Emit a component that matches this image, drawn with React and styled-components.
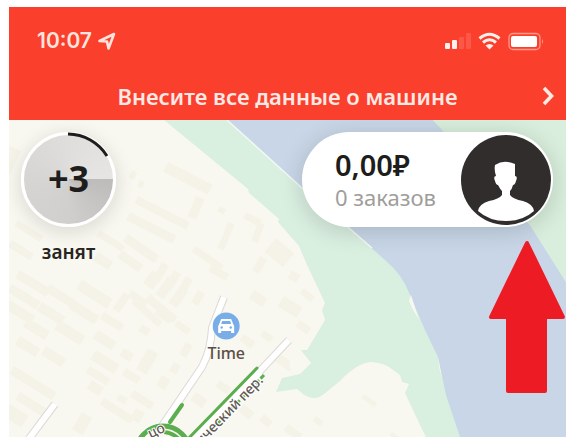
import React from 'react';
import styled, { createGlobalStyle } from 'styled-components';

// x, y, width, height, angle
const buildings = [
	[12, 284, 34, 9, 32], [20, 270, 36, 9, 32], [50, 284, 30, 9, 32], [82, 280, 36, 11, 32],
	[10, 300, 30, 10, 32], [42, 302, 28, 10, 32], [74, 300, 30, 10, 32], [104, 312, 24, 8, 32],
	[28, 318, 26, 10, 32], [60, 320, 30, 11, 32], [98, 330, 22, 10, 32], [20, 336, 24, 10, 32],
	[46, 346, 24, 10, 32], [96, 350, 28, 11, 32], [14, 366, 50, 9, 32], [90, 366, 24, 8, 32],
	[20, 392, 36, 9, 32], [10, 404, 22, 14, 32], [124, 348, 12, 9, 32], [126, 368, 18, 8, 32],
	[148, 348, 12, 24, 30], [162, 375, 10, 12, 30], [92, 380, 14, 10, 32], [104, 398, 36, 8, 32],
	[134, 390, 24, 8, 32], [82, 412, 12, 20, 30], [136, 408, 10, 12, 30], [120, 394, 9, 7, 30],
	[124, 292, 8, 20, 35], [136, 298, 36, 7, 42], [142, 324, 10, 8, 30], [150, 294, 36, 8, 40],
	[152, 270, 12, 16, 35], [168, 276, 10, 22, 35], [180, 286, 10, 20, 35],
	[168, 162, 50, 11, 27], [196, 196, 9, 22, 22], [220, 206, 7, 6, 27], [138, 196, 58, 8, 27],
	[130, 212, 52, 9, 27], [228, 222, 7, 28, 22], [246, 212, 18, 7, 27], [258, 222, 7, 20, 20],
	[196, 246, 34, 7, 35], [212, 264, 20, 8, 30], [260, 256, 8, 16, 30], [276, 238, 24, 18, 40],
	[292, 270, 10, 9, 30], [254, 290, 16, 10, 32], [284, 296, 22, 12, 32], [304, 288, 14, 7, 40],
	[128, 234, 38, 9, 35], [122, 250, 26, 9, 35], [162, 262, 8, 20, 30], [174, 270, 8, 20, 30],
	[186, 276, 8, 18, 30], [198, 290, 8, 14, 30], [132, 290, 20, 8, 35],
	[10, 146, 12, 26, 25], [18, 220, 30, 7, 32], [12, 240, 26, 8, 32], [100, 230, 30, 7, 32],
	[98, 252, 18, 10, 32], [132, 170, 6, 8, 25], [140, 180, 5, 7, 25],
	[196, 392, 14, 10, 35], [220, 380, 14, 8, 35], [264, 330, 12, 7, 35], [280, 354, 18, 9, 35],
	[244, 334, 14, 8, 35], [300, 320, 14, 8, 35], [364, 394, 16, 5, 35], [392, 432, 10, 4, 35],
	[158, 308, 18, 7, 35], [178, 320, 16, 7, 35], [186, 342, 8, 14, 30], [174, 362, 8, 10, 30],
	[244, 404, 14, 9, 40], [264, 414, 12, 8, 40], [288, 424, 18, 8, 35], [316, 416, 10, 6, 35],
];

function Streets () {
	return (
		<MapCanvas viewBox="9 120 557 317" preserveAspectRatio="xMidYMin slice" aria-hidden="true">
			<rect x="9" y="120" width="557" height="317" fill="#f9f8f0"/>
			{
				buildings.map(([x, y, w, h, angle]) => (
					<rect
						key={`${x}-${y}`}
						x={x}
						y={y}
						width={w}
						height={h}
						fill="#f5f3e7"
						transform={`rotate(${angle} ${x} ${y})`}
					/>
				))
			}
			<path d="M164 120L248 189L249 193L279 219L278 222L299 246L307 265L325 303L322 310L325 320L307 350L300 349L311 363L300 374L282 378L276 392L297 389L303 394Q315 402 324 394L340 381Q358 362 372 362Q385 363 393 370L400 375L402 382L409 384L405 393L413 410L420 425L426 437H566V120Z" fill="#d9efe0"/>
			<path d="M307 350L298 350L311 363L298 374L290 368V345Z" fill="#f9f8f0"/>
			<path d="M227 120L302 188L349 228L385 260Q403 275 410 295L425 330L438 357L446 395L460 437H566V282L530 225L433 120Z" fill="#c8d6e7"/>
			<path d="M227 120L302 188L349 228L372 248" fill="none" stroke="#f4f8f4" strokeWidth="1.5"/>
			<path d="M411 295L409 301L412 308L419 320ZM438 357L439 367L442 379Z" fill="#f9f8f0"/>
			<path d="M433 120L530 225L566 282V120Z" fill="#d9eedd"/>

			<g fill="none" stroke="#dcd8d6" strokeWidth="8">
				<path d="M224 297L212 328Q211 350 202 367L162 426"/>
				<path d="M289 340L190 446"/>
				<path d="M55 404L28 440"/>
			</g>
			<g fill="none" stroke="#ffffff" strokeWidth="6">
				<path d="M224 297L212 328Q211 350 202 367L162 426"/>
				<path d="M289 340L190 446"/>
				<path d="M55 404L28 440"/>
			</g>

			<path d="M182 405L170 422" stroke="#5bae4e" strokeWidth="4" strokeLinecap="round"/>
			<circle cx="163" cy="453" r="27" fill="#f9f8f0" stroke="#5bae4e" strokeWidth="5"/>
			<path d="M164 432Q175 433 181 442" fill="none" stroke="#5bae4e" strokeWidth="4"/>
			<path d="M261 373L190 446" stroke="#ffffff" strokeWidth="10"/>
			<path d="M257 368L184 443" stroke="#5bae4e" strokeWidth="3" strokeLinecap="round"/>
			<path d="M264 375L196 446" stroke="#5bae4e" strokeWidth="3" strokeDasharray="5 2"/>
			<StreetName x="264" y="381" textAnchor="end" transform="rotate(-46 264 381)">мический пер.</StreetName>
			<StreetName x="166" y="431" textAnchor="end" transform="rotate(-26 166 431)">цо</StreetName>
		</MapCanvas>
	);
}

function StatusIcons () {
	return (
		<svg width="100" height="20" viewBox="444 31 100 20" aria-hidden="true">
			<g fill="#fff0ec">
				<rect x="445" y="43" width="5" height="6" rx="1"/>
				<rect x="452" y="40" width="5" height="9" rx="1"/>
				<rect x="459" y="37" width="5" height="12" rx="1" opacity="0.14"/>
				<rect x="466" y="33" width="5" height="16" rx="1" opacity="0.14"/>
			</g>
			<g fill="none" stroke="#fff0ec" strokeWidth="3">
				<path d="M479.500 38.500Q489.500 30 499.500 38.500"/>
				<path d="M483 42.500Q489.500 37 496 42.500"/>
			</g>
			<path d="M485.500 45.500Q489.500 42.500 493.500 45.500L489.500 49.500Z" fill="#fff0ec"/>
			<rect x="509" y="33.500" width="31" height="16" rx="4" fill="none" stroke="#fd9a8c" strokeWidth="1.300"/>
			<rect x="511" y="36" width="26" height="11" rx="2" fill="#ffffff"/>
			<path d="M542 39V44Q544 41.500 542 39Z" fill="#fd9a8c"/>
		</svg>
	);
}

export default function App () {
	return (
		<>
			<GlobalStyle/>
			<Screen>
				<Header>
					<StatusBar>
						<Clock>
							10:07
							<svg width="18" height="18" viewBox="0 0 18 18" aria-hidden="true">
								<path d="M1.500 9L16 2L10.500 16.500L9 9.500Z" fill="none" stroke="#ffe4de" strokeWidth="2.600" strokeLinejoin="round"/>
							</svg>
						</Clock>
						<StatusIcons/>
					</StatusBar>
					<Banner type="button">
						<span>Внесите все данные о машине</span>
						<svg width="12" height="20" viewBox="0 0 12 20" aria-hidden="true">
							<path d="M2 2L9.500 10L2 18" fill="none" stroke="#ffe9e4" strokeWidth="3.600"/>
						</svg>
					</Banner>
				</Header>
				<MapArea>
					<Streets/>
					<Controls>
						<Activity>
							<ActivityButton type="button" aria-labelledby="status">
								<svg width="95" height="95" viewBox="0 0 95 95" aria-hidden="true">
									<path d="M47 2A46 46 0 0 1 86 24" fill="none" stroke="#1d1d1b" strokeWidth="3"/>
								</svg>
								+3
							</ActivityButton>
							<ActivityLabel id="status">занят</ActivityLabel>
						</Activity>
						<Balance type="button">
							<BalanceText>
								<Amount>0,00₽</Amount>
								<Orders>0 заказов</Orders>
							</BalanceText>
							<svg width="90" height="90" viewBox="0 0 90 90" aria-hidden="true">
								<circle cx="45" cy="45" r="45" fill="#302d2c"/>
								<path d="M34 30Q43 24 54 29V41Q57 41 55 46Q54 50 52 50Q51 54 49 56V60Q52 64 62 66Q72 69 73 76Q62 86 45 86Q28 86 17 76Q18 69 28 66Q38 64 41 60V56Q39 54 37 50Q35 50 34 46Q32 41 35 41Q33 35 34 30Z" fill="#ffffff"/>
							</svg>
						</Balance>
					</Controls>
					<Place>
						<svg width="28" height="28" viewBox="0 0 28 28" aria-hidden="true">
							<circle cx="14" cy="14" r="13.500" fill="#78ade8"/>
							<path d="M9 7H19L21 12L22 14V21H19V19H9V21H6V14L7 12Z" fill="#ffffff"/>
							<path d="M10 9H18L19 12H9Z" fill="#78ade8"/>
							<circle cx="9.500" cy="15.500" r="1.200" fill="#78ade8"/>
							<circle cx="18.500" cy="15.500" r="1.200" fill="#78ade8"/>
						</svg>
						Time
					</Place>
					<Pointer width="78" height="156" viewBox="0 0 78 156" aria-hidden="true">
						<path d="M39 4L3 78H20V152H57V78H75Z" fill="#ed1c24" stroke="#ed1c24" strokeWidth="4" strokeLinejoin="round"/>
					</Pointer>
				</MapArea>
			</Screen>
		</>
	);
}

const GlobalStyle = createGlobalStyle`
	* {
		box-sizing: border-box;
	}
	body {
		margin: 0;
		background-color: #ffffff;
		font-family: 'Noto Sans', sans-serif;
	}
	button {
		font-family: inherit;
		border: none;
		cursor: pointer;
	}
	svg {
		display: block;
		flex-shrink: 0;
	}
`;

const Screen = styled.div`
	display: flex;
	flex-direction: column;
	min-height: 100vh;
	padding: 7px 3px 0 9px;
`;

const Header = styled.header`
	background-color: #fb3f2d;
	color: #ffe9e4;
`;

const StatusBar = styled.div`
	display: flex;
	align-items: center;
	justify-content: space-between;
	padding: 20px 22px 0 28px;
	height: 48px;
`;

const Clock = styled.div`
	display: flex;
	align-items: center;
	gap: 6px;
	color: #ffe4de;
	font-family: Inter, sans-serif;
	font-size: 21px;
	font-weight: 600;
	line-height: 28px;
`;

const Banner = styled.button`
	display: flex;
	align-items: center;
	width: 100%;
	height: 65px;
	padding: 16px 12px 0 24px;
	background-color: transparent;
	color: inherit;
	font-size: 22px;
	font-weight: 600;
	line-height: 30px;
	span {
		flex: 1;
		text-align: center;
	}
`;

const MapArea = styled.main`
	position: relative;
	flex: 1;
	overflow: hidden;
	background-color: #f9f8f0;
`;

const MapCanvas = styled.svg`
	position: absolute;
	inset: 0;
	width: 100%;
	height: 100%;
`;

const StreetName = styled.text`
	font-size: 14px;
	font-weight: 500;
	fill: #5f5955;
	stroke: #ffffff;
	stroke-width: 2px;
	paint-order: stroke;
`;

const Controls = styled.div`
	position: relative;
	display: flex;
	align-items: flex-start;
	justify-content: space-between;
	padding: 12px 13px 0 12px;
`;

const Activity = styled.div`
	display: flex;
	flex-direction: column;
	align-items: center;
	gap: 12px;
`;

const ActivityButton = styled.button`
	position: relative;
	width: 95px;
	height: 95px;
	padding: 0 0 2px 0;
	border: 3px solid #ffffff;
	border-radius: 50%;
	background: conic-gradient(#dfdedc, #e6e5e3 90deg, #bdbcbb 90deg, #d0cfce 180deg, #d6d5d4 270deg, #dfdedc);
	box-shadow: 0 4px 20px rgba(0,0,0,0.14);
	color: #1d1d1b;
	font-size: 36px;
	font-weight: 700;
	svg {
		position: absolute;
		top: -3px;
		left: -3px;
	}
`;

const ActivityLabel = styled.span`
	color: #262522;
	font-size: 19px;
	font-weight: 600;
	line-height: 26px;
`;

const Balance = styled.button`
	display: flex;
	align-items: center;
	justify-content: space-between;
	width: 45%;
	min-width: 251px;
	height: 95px;
	padding: 0 2px 0 33px;
	border-radius: 48px;
	background-color: #ffffff;
	box-shadow: 0 4px 24px rgba(0,0,0,0.16);
`;

const BalanceText = styled.span`
	display: flex;
	flex-direction: column;
	text-align: left;
	white-space: nowrap;
`;

const Amount = styled.span`
	color: #1d1d1b;
	font-size: 29px;
	font-weight: 600;
	line-height: 34px;
`;

const Orders = styled.span`
	color: #9f9d9b;
	font-size: 22px;
	line-height: 30px;
`;

const Place = styled.div`
	position: absolute;
	top: 192px;
	left: 39%;
	display: flex;
	flex-direction: column;
	align-items: center;
	transform: translateX(-50%);
	color: #5c4f45;
	font-size: 16px;
	font-weight: 500;
	line-height: 26px;
`;

const Pointer = styled.svg`
	position: absolute;
	top: 119px;
	right: 0;
`;
